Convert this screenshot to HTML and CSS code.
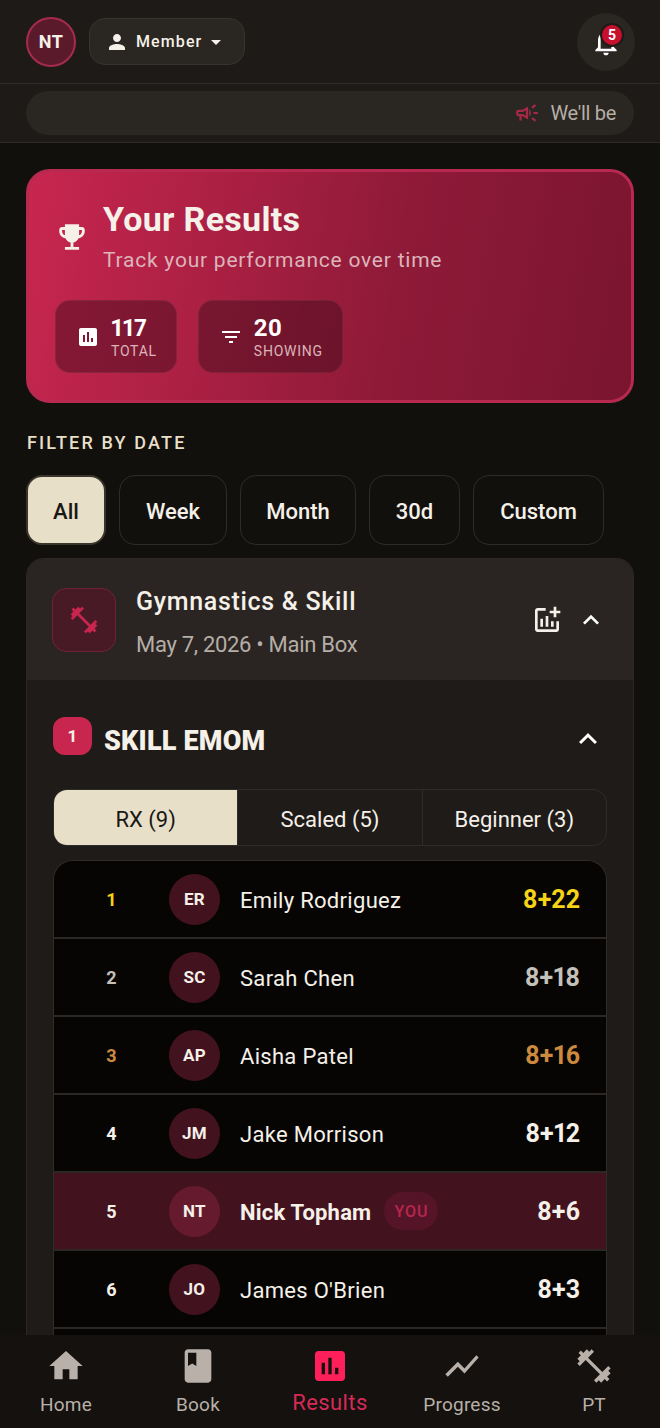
FILE: index.html
```html
<!DOCTYPE html>
<html lang="en">
<head>
  <meta charset="UTF-8" />
  <meta name="viewport" content="width=device-width, initial-scale=1.0"/>
  <title>Your Results</title>
  <link rel="stylesheet" href="styles.css">
</head>
<body>
  <div class="app">
    <header class="topbar">
      <div class="avatar-me">NT</div>
      <button class="role-btn">
        <svg class="role-icon" viewBox="0 0 24 24"><path d="M12 12c2.21 0 4-1.79 4-4s-1.79-4-4-4-4 1.79-4 4 1.79 4 4 4zm0 2c-2.67 0-8 1.34-8 4v2h16v-2c0-2.66-5.33-4-8-4z"/></svg>
        <span>Member</span>
        <svg class="role-caret" viewBox="0 0 24 24"><path d="M7 10l5 5 5-5z"/></svg>
      </button>
      <button class="bell-btn">
        <svg class="bell-icon" viewBox="0 0 24 24"><path d="M12 22c1.1 0 2-.9 2-2h-4c0 1.1.9 2 2 2zm6-6v-5c0-3.07-1.63-5.64-4.5-6.32V4c0-.83-.67-1.5-1.5-1.5s-1.5.67-1.5 1.5v.68C7.64 5.36 6 7.92 6 11v5l-2 2v1h16v-1l-2-2zm-2 1H8v-6c0-2.48 1.51-4.5 4-4.5s4 2.02 4 4.5v6z"/></svg>
        <span class="bell-count">5</span>
      </button>
    </header>

    <div class="ticker-band">
      <div class="ticker">
        <svg class="ticker-icon" viewBox="0 0 24 24"><path d="M18 11v2h4v-2h-4zm-2 6.61c.96.71 2.21 1.65 3.2 2.39.4-.53.8-1.07 1.2-1.6-.99-.74-2.24-1.68-3.2-2.4-.4.54-.8 1.08-1.2 1.61zM20.4 5.6c-.4-.53-.8-1.07-1.2-1.6-.99.74-2.24 1.68-3.2 2.4.4.53.8 1.07 1.2 1.6.96-.72 2.21-1.65 3.2-2.4zM4 9c-1.1 0-2 .9-2 2v2c0 1.1.9 2 2 2h1v4h2v-4h1l5 3V6L8 9H4zm5.03 1.71L11 9.53v4.94l-1.97-1.18-.48-.29H4v-2h4.55l.48-.29zM15.5 12c0-1.33-.58-2.53-1.5-3.35v6.69c.92-.81 1.5-2.01 1.5-3.34z"/></svg>
        <span>We'll be</span>
      </div>
    </div>

    <main class="content">
      <section class="hero">
        <div class="hero-top">
          <svg class="hero-icon" viewBox="0 0 24 24"><path d="M19 5h-2V3H7v2H5c-1.1 0-2 .9-2 2v1c0 2.55 1.92 4.63 4.39 4.94.63 1.5 1.98 2.63 3.61 2.96V19H7v2h10v-2h-4v-3.1c1.63-.33 2.98-1.46 3.61-2.96C19.08 12.63 21 10.55 21 8V7c0-1.1-.9-2-2-2zM5 8V7h2v3.82C5.84 10.4 5 9.3 5 8zm14 0c0 1.3-.84 2.4-2 2.82V7h2v1z"/></svg>
          <div>
            <h1>Your Results</h1>
            <p>Track your performance over time</p>
          </div>
        </div>
        <div class="stats">
          <div class="stat">
            <svg class="stat-icon" viewBox="0 0 24 24"><path d="M19 3H5c-1.1 0-2 .9-2 2v14c0 1.1.9 2 2 2h14c1.1 0 2-.9 2-2V5c0-1.1-.9-2-2-2zM9 17H7v-7h2v7zm4 0h-2V7h2v10zm4 0h-2v-4h2v4z"/></svg>
            <div>
              <div class="stat-num">117</div>
              <div class="stat-label">TOTAL</div>
            </div>
          </div>
          <div class="stat">
            <svg class="stat-icon" viewBox="0 0 24 24"><path d="M10 18h4v-2h-4v2zM3 6v2h18V6H3zm3 7h12v-2H6v2z"/></svg>
            <div>
              <div class="stat-num">20</div>
              <div class="stat-label">SHOWING</div>
            </div>
          </div>
        </div>
      </section>

      <div class="filter-title">FILTER BY DATE</div>
      <div class="filters">
        <button class="pill pill-all active">All</button>
        <button class="pill pill-week">Week</button>
        <button class="pill pill-month">Month</button>
        <button class="pill pill-30d">30d</button>
        <button class="pill pill-custom">Custom</button>
      </div>

      <section class="card">
        <div class="card-head">
          <div class="card-icon">
            <svg viewBox="0 0 24 24"><path d="M20.57 14.86L22 13.43 20.57 12 17 15.57 8.43 7 12 3.43 10.57 2 9.14 3.43 7.71 2 5.57 4.14 4.14 2.71 2.71 4.14l1.43 1.43L2 7.71l1.43 1.43L2 10.57 3.43 12 7 8.43 15.57 17 12 20.57 13.43 22l1.43-1.43L16.29 22l2.14-2.14 1.43 1.43 1.43-1.43-1.43-1.43L22 16.29z"/></svg>
          </div>
          <div class="card-info">
            <div class="card-title">Gymnastics &amp; Skill</div>
            <div class="card-sub">May 7, 2026 • Main Box</div>
          </div>
          <svg class="add-chart" viewBox="0 0 24 24"><path d="M22 5v2h-3v3h-2V7h-3V5h3V2h2v3h3zm-3 14H5V5h6V3H5c-1.1 0-2 .9-2 2v14c0 1.1.9 2 2 2h14c1.1 0 2-.9 2-2v-6h-2v6zm-4-6v4h2v-4h-2zm-4 4h2V9h-2v8zm-2 0v-6H7v6h2z"/></svg>
          <svg class="chevron" viewBox="0 0 24 24"><path d="M12 8l-6 6 1.41 1.41L12 10.83l4.59 4.58L18 14z"/></svg>
        </div>

        <div class="card-body">
          <div class="wod-head">
            <span class="wod-num">1</span>
            <h2>SKILL EMOM</h2>
            <svg class="chevron" viewBox="0 0 24 24"><path d="M12 8l-6 6 1.41 1.41L12 10.83l4.59 4.58L18 14z"/></svg>
          </div>

          <div class="tabs">
            <div class="tab active">RX (9)</div>
            <div class="tab">Scaled (5)</div>
            <div class="tab">Beginner (3)</div>
          </div>

          <div class="board">
            <div class="row gold">
              <span class="rank">1</span><span class="initials">ER</span>
              <span class="name">Emily Rodriguez</span><span class="score">8+22</span>
            </div>
            <div class="row silver">
              <span class="rank">2</span><span class="initials">SC</span>
              <span class="name">Sarah Chen</span><span class="score">8+18</span>
            </div>
            <div class="row bronze">
              <span class="rank">3</span><span class="initials">AP</span>
              <span class="name">Aisha Patel</span><span class="score">8+16</span>
            </div>
            <div class="row">
              <span class="rank">4</span><span class="initials">JM</span>
              <span class="name">Jake Morrison</span><span class="score">8+12</span>
            </div>
            <div class="row me">
              <span class="rank">5</span><span class="initials">NT</span>
              <span class="name">Nick Topham</span><span class="you">YOU</span><span class="score">8+6</span>
            </div>
            <div class="row">
              <span class="rank">6</span><span class="initials">JO</span>
              <span class="name">James O'Brien</span><span class="score">8+3</span>
            </div>
            <div class="row"></div>
          </div>
        </div>
      </section>
    </main>

    <nav class="tabbar">
      <a class="nav-item">
        <svg viewBox="0 0 24 24"><path d="M10 20v-6h4v6h5v-8h3L12 3 2 12h3v8z"/></svg>
        <span>Home</span>
      </a>
      <a class="nav-item">
        <svg viewBox="0 0 24 24"><path d="M18 2H6c-1.1 0-2 .9-2 2v16c0 1.1.9 2 2 2h12c1.1 0 2-.9 2-2V4c0-1.1-.9-2-2-2zM6 4h5v8l-2.5-1.5L6 12V4z"/></svg>
        <span>Book</span>
      </a>
      <a class="nav-item current">
        <svg viewBox="0 0 24 24"><path d="M19 3H5c-1.1 0-2 .9-2 2v14c0 1.1.9 2 2 2h14c1.1 0 2-.9 2-2V5c0-1.1-.9-2-2-2zM9 17H7v-7h2v7zm4 0h-2V7h2v10zm4 0h-2v-4h2v4z"/></svg>
        <span>Results</span>
      </a>
      <a class="nav-item">
        <svg viewBox="0 0 24 24"><path d="M3.5 18.49l6-6.01 4 4L22 6.92l-1.41-1.41-7.09 7.97-4-4L2 16.99z"/></svg>
        <span>Progress</span>
      </a>
      <a class="nav-item">
        <svg viewBox="0 0 24 24"><path d="M20.57 14.86L22 13.43 20.57 12 17 15.57 8.43 7 12 3.43 10.57 2 9.14 3.43 7.71 2 5.57 4.14 4.14 2.71 2.71 4.14l1.43 1.43L2 7.71l1.43 1.43L2 10.57 3.43 12 7 8.43 15.57 17 12 20.57 13.43 22l1.43-1.43L16.29 22l2.14-2.14 1.43 1.43 1.43-1.43-1.43-1.43L22 16.29z"/></svg>
        <span>PT</span>
      </a>
    </nav>
  </div>
</body>
</html>
```
FILE: styles.css
```css
* {
  box-sizing: border-box;
}

html, body {
  margin: 0;
  height: 100%;
}

body {
  font-family: Roboto, "Liberation Sans", sans-serif;
  background: #12100d;
  color: #f5f0e8;
}

button {
  font-family: inherit;
  cursor: pointer;
}

svg {
  display: block;
  fill: currentColor;
  flex: none;
}

.app {
  position: relative;
  height: 1428px;
  overflow: hidden;
  display: flex;
  flex-direction: column;
}

/* top bar */
.topbar {
  height: 84px;
  flex: none;
  display: flex;
  align-items: center;
  padding: 0 25px 0 26px;
  background: #1d1a17;
  border-bottom: 1px solid #2f2b27;
}

.avatar-me {
  width: 50px;
  height: 50px;
  border-radius: 50%;
  display: flex;
  align-items: center;
  justify-content: center;
  background: #5a1a2c;
  border: 2px solid #a62b4c;
  font-size: 18px;
  font-weight: 700;
  letter-spacing: 0.5px;
}

.role-btn {
  width: 156px;
  height: 47px;
  margin-left: 13px;
  display: flex;
  align-items: center;
  padding: 0 0 0 15px;
  background: #2a2622;
  border: 1px solid #38332e;
  border-radius: 16px;
  color: #f5f0e8;
  font-size: 16px;
  font-weight: 500;
  letter-spacing: 1.1px;
}

.role-icon {
  width: 24px;
  height: 24px;
  margin-right: 7px;
}

.role-caret {
  width: 24px;
  height: 24px;
  margin-left: 2px;
}

.bell-btn {
  position: relative;
  width: 58px;
  height: 58px;
  margin-left: auto;
  padding: 0;
  background: #2a2622;
  border: none;
  border-radius: 50%;
  color: #fff;
  display: flex;
  align-items: center;
  justify-content: center;
}

.bell-icon {
  width: 32px;
  height: 32px;
}

.bell-count {
  position: absolute;
  top: 10px;
  right: 11px;
  width: 24px;
  height: 24px;
  border-radius: 50%;
  background: #c8102e;
  border: 2px solid #1d1a17;
  display: flex;
  align-items: center;
  justify-content: center;
  font-size: 14px;
  font-weight: 700;
}

/* announcement strip */
.ticker-band {
  height: 59px;
  flex: none;
  padding: 7px 26px 0;
  background: #1d1a17;
  border-bottom: 1px solid #2f2b27;
}

.ticker {
  height: 44px;
  border-radius: 22px;
  background: #2a2622;
  display: flex;
  align-items: center;
  justify-content: flex-end;
  padding-right: 18px;
  color: #b5aea6;
  font-size: 20px;
  letter-spacing: -0.3px;
}

.ticker-icon {
  width: 26px;
  height: 26px;
  margin-right: 10px;
  color: #a92848;
}

/* main column */
.content {
  flex: 1;
  min-height: 0;
  padding: 26px 26px 0;
}

.hero {
  height: 234px;
  padding: 27px 26px 0;
  border: 3px solid #b8294f;
  border-radius: 24px;
  background: linear-gradient(100deg, #c8264f 0%, #8f1a38 60%, #7a152f 100%);
}

.hero-top {
  display: flex;
  align-items: center;
  height: 76px;
}

.hero-icon {
  width: 34px;
  height: 34px;
  margin-right: 14px;
  color: #f5f0e8;
}

.hero h1 {
  margin: 0;
  font-size: 34px;
  line-height: 38px;
  font-weight: 700;
  letter-spacing: 0.3px;
}

.hero p {
  margin: 8px 0 0;
  font-size: 21px;
  line-height: 28px;
  letter-spacing: 0.77px;
  color: #dcb4ba;
}

.stats {
  display: flex;
  gap: 21px;
  margin-top: 25px;
}

.stat {
  height: 73px;
  padding: 0 19px 0 20px;
  display: flex;
  align-items: center;
  gap: 11px;
  border: 1px solid rgba(255, 255, 255, 0.06);
  border-radius: 15px;
  background: rgba(60, 10, 25, 0.45);
}

.stat-icon {
  width: 24px;
  height: 24px;
  color: #fff;
}

.stat-num {
  font-size: 24px;
  line-height: 28px;
  font-weight: 700;
  font-variant-numeric: proportional-nums;
  color: #fff;
}

.stat-label {
  font-size: 14px;
  line-height: 18px;
  letter-spacing: 0.75px;
  color: #dcb4ba;
}

/* date filter */
.filter-title {
  margin: 29px 0 0 1px;
  font-size: 18px;
  line-height: 22px;
  font-weight: 500;
  letter-spacing: 2.15px;
  color: #e8dfc8;
}

.filters {
  display: flex;
  margin-top: 21px;
}

.pill {
  height: 70px;
  background: #12100d;
  border: 1px solid #2f2b27;
  border-radius: 16px;
  color: #f5f0e8;
  font-size: 22px;
  font-weight: 500;
  padding: 2px 0 0;
}

.pill.active {
  background: #e8dfc8;
  border: 2px solid #3a352c;
  color: #1a1714;
}

.pill-all { width: 80px; }
.pill-week { width: 108px; margin-left: 13px; }
.pill-month { width: 116px; margin-left: 13px; }
.pill-30d { width: 91px; margin-left: 13px; }
.pill-custom { width: 131px; margin-left: 13px; }

/* workout card */
.card {
  margin-top: 13px;
  border: 1px solid #2d2825;
  border-bottom: none;
  border-radius: 18px 18px 0 0;
  background: #1f1b18;
  overflow: hidden;
}

.card-head {
  height: 121px;
  display: flex;
  align-items: center;
  padding: 0 25px;
  background: #2a2523;
}

.card-icon {
  width: 64px;
  height: 64px;
  display: flex;
  align-items: center;
  justify-content: center;
  border: 1px solid #6e2238;
  border-radius: 14px;
  background: #471a26;
  color: #c9264f;
}

.card-icon svg {
  width: 32px;
  height: 32px;
}

.card-info {
  flex: 1;
  margin-left: 20px;
  padding-top: 6px;
}

.card-title {
  font-size: 25px;
  line-height: 32px;
  font-weight: 500;
  letter-spacing: 0.7px;
}

.card-sub {
  margin-top: 12px;
  font-size: 22px;
  line-height: 30px;
  letter-spacing: -0.3px;
  color: #b5aea6;
}

.add-chart {
  width: 32px;
  height: 32px;
  color: #f5f0e8;
}

.chevron {
  width: 32px;
  height: 32px;
  margin-left: 12px;
  margin-right: 1px;
  color: #fff;
}

.card-body {
  padding: 37px 26px 0;
}

.wod-head {
  display: flex;
  align-items: center;
  height: 44px;
}

.wod-num {
  width: 39px;
  height: 38px;
  margin-top: -6px;
  border-radius: 12px;
  background: #c9264f;
  display: flex;
  align-items: center;
  justify-content: center;
  font-size: 17px;
  font-weight: 700;
}

.wod-head h2 {
  flex: 1;
  margin: 4px 0 0 12px;
  font-size: 27px;
  font-weight: 900;
  letter-spacing: 0.2px;
}

.wod-head .chevron {
  margin: 0 1px 0 0;
  width: 36px;
  height: 36px;
}

.tabs {
  display: flex;
  height: 57px;
  margin-top: 28px;
  border: 1px solid #2f2b27;
  border-radius: 14px;
  overflow: hidden;
}

.tab {
  flex: 1;
  display: flex;
  align-items: center;
  justify-content: center;
  padding-top: 3px;
  font-size: 22px;
  color: #f5f0e8;
  border-left: 1px solid #2f2b27;
}

.tab:first-child {
  border-left: none;
}

.tab.active {
  background: #e8dfc8;
  color: #1a1714;
}

.board {
  margin-top: 14px;
  border: 1px solid #2f2b27;
  border-bottom: none;
  border-radius: 20px 20px 0 0;
  overflow: hidden;
}

.row {
  height: 78px;
  display: flex;
  align-items: center;
  padding-right: 26px;
  background: #060504;
  border-bottom: 2px solid #2a2725;
  font-size: 22px;
}

.rank {
  width: 115px;
  text-align: center;
  font-size: 18px;
  font-weight: 700;
}

.initials {
  width: 51px;
  height: 51px;
  border-radius: 50%;
  background: #43121f;
  display: flex;
  align-items: center;
  justify-content: center;
  font-size: 17px;
  font-weight: 700;
  letter-spacing: 0.3px;
}

.name {
  margin-left: 20px;
  padding-top: 2px;
  letter-spacing: 0.3px;
}

.score {
  margin-left: auto;
  font-size: 25px;
  font-weight: 700;
  font-variant-numeric: proportional-nums;
}

.gold .rank, .gold .score { color: #f5d316; }
.silver .rank, .silver .score { color: #c4c0ba; }
.bronze .rank, .bronze .score { color: #cd8a3f; }

.me {
  background: #43121f;
}

.me .initials {
  background: #661a2e;
}

.me .name {
  font-weight: 700;
  letter-spacing: 0.2px;
}

.you {
  height: 38px;
  margin-left: 13px;
  padding: 0 10px;
  display: flex;
  align-items: center;
  border-radius: 19px;
  background: #561428;
  color: #b8264e;
  font-size: 16px;
  font-weight: 500;
  letter-spacing: 1px;
}

/* bottom navigation */
.tabbar {
  position: absolute;
  left: 0;
  right: 0;
  bottom: 0;
  height: 93px;
  display: flex;
  background: #14110e;
}

.nav-item {
  flex: 1;
  display: flex;
  flex-direction: column;
  align-items: center;
  padding-top: 11px;
  color: #b8b0a9;
  font-size: 19px;
  letter-spacing: 0.2px;
}

.nav-item svg {
  width: 40px;
  height: 40px;
}

.nav-item span {
  margin-top: 7px;
  line-height: 24px;
}

.nav-item.current {
  color: #ff1f5a;
}

.nav-item.current span {
  margin-top: 5px;
  font-size: 22px;
  letter-spacing: 0.4px;
  color: #d42a58;
}
```
